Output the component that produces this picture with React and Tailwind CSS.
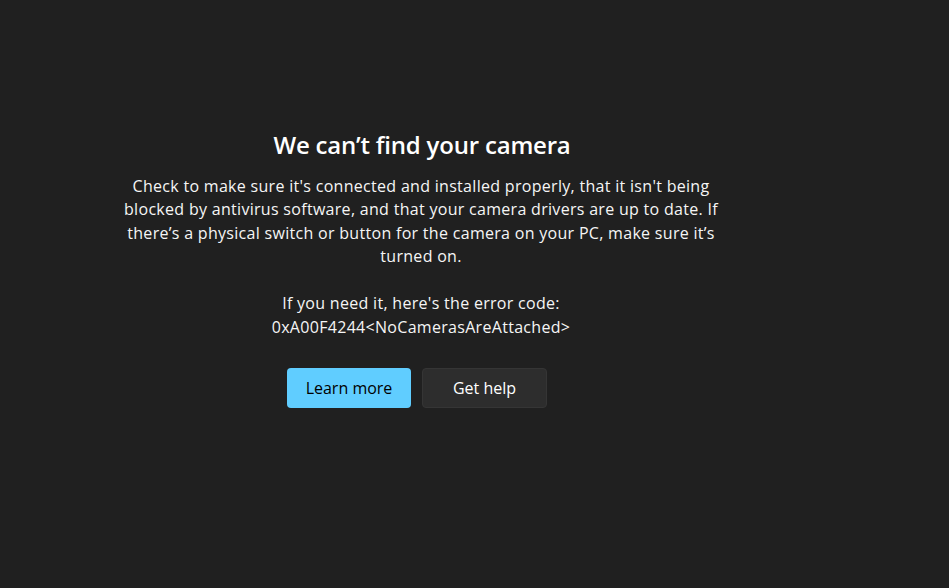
export default function App() {
  return (
    <div
      className="w-full h-[588px] bg-[#202020] text-white"
      style={{ fontFamily: '"Open Sans", "Noto Sans", sans-serif' }}
    >
      <div className="w-[842px] pt-[128px] flex flex-col items-center text-center">
        <h1 className="text-[24px] font-semibold leading-[34px] tracking-[-0.2px] ml-[2px]">
          We can’t find your camera
        </h1>
        <p className="mt-[13px] w-[600px] text-[16px] leading-[23.3px] tracking-[0.3px] text-[#f5f5f5]">
          Check to make sure it's connected and installed properly, that it isn't being blocked by
          antivirus software, and that your camera drivers are up to date. If there’s a physical
          switch or button for the camera on your PC, make sure it’s turned on.
        </p>
        <p className="mt-[23px] text-[16px] leading-[24px] tracking-[0.3px] text-[#f5f5f5]">
          If you need it, here's the error code:
          <br />
          0xA00F4244&lt;NoCamerasAreAttached&gt;
        </p>
        <div className="mt-[29px] mr-[8px] flex gap-[11px]">
          <button className="w-[124px] h-[40px] rounded-[4px] bg-[#60cdff] text-[#000000] text-[16px]">
            Learn more
          </button>
          <button className="w-[125px] h-[40px] rounded-[4px] bg-[#2d2d2d] border border-[#353535] text-white text-[16px]">
            Get help
          </button>
        </div>
      </div>
    </div>
  );
}
